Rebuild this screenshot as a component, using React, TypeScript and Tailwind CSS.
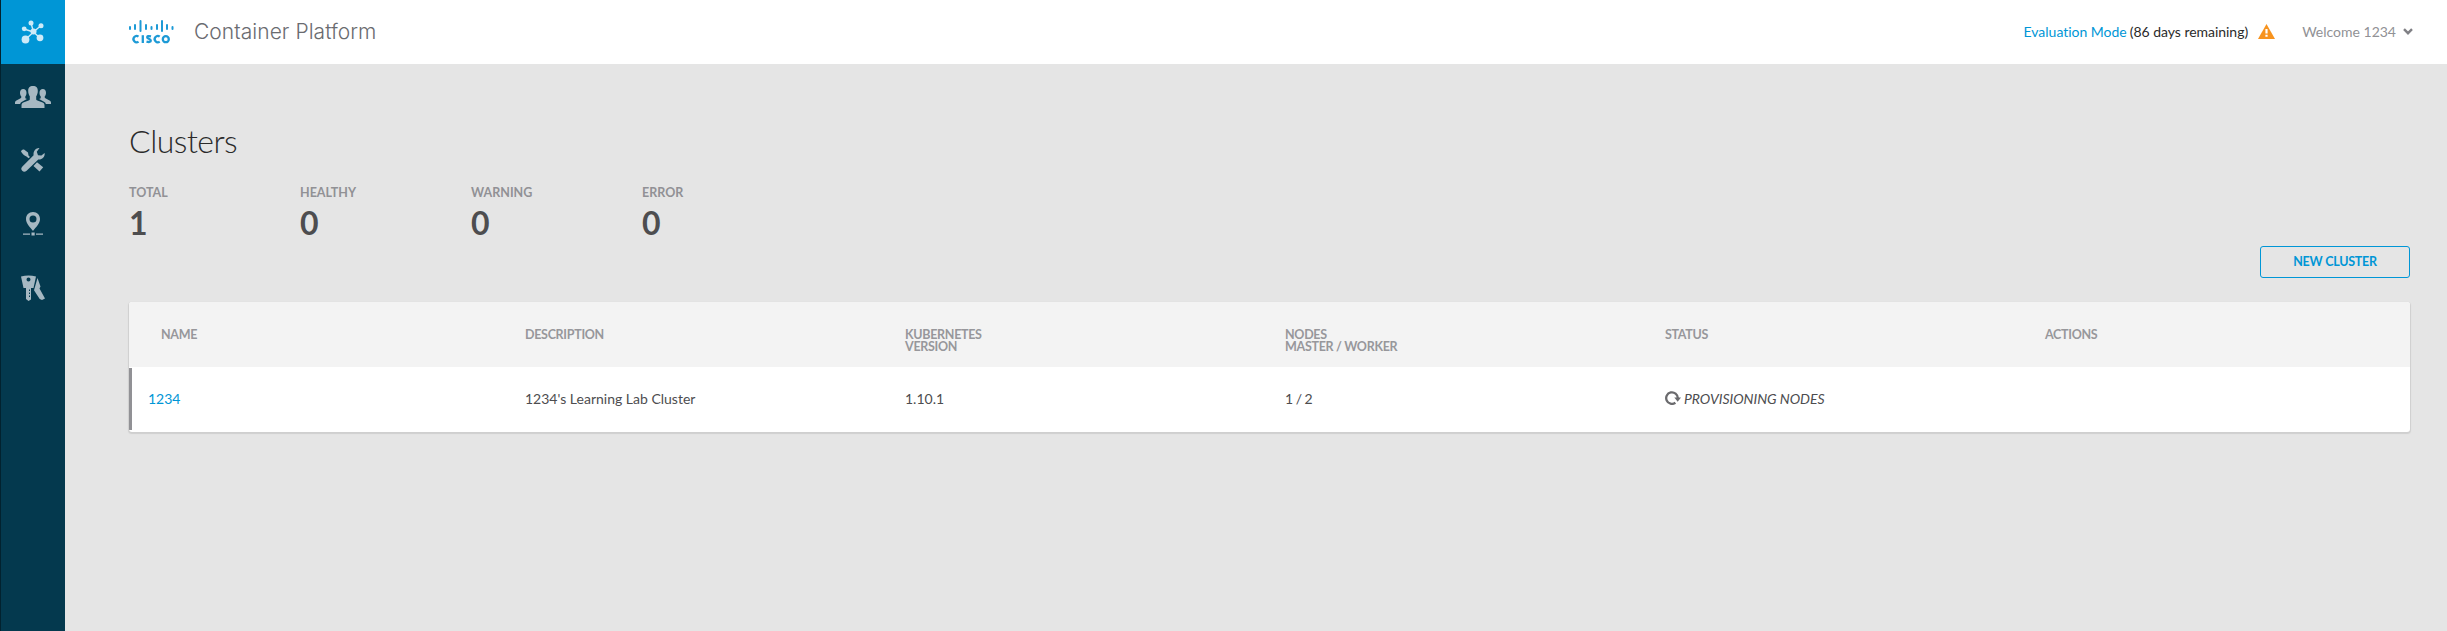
import React from "react";

const stats = [
  ["TOTAL", "1"],
  ["HEALTHY", "0"],
  ["WARNING", "0"],
  ["ERROR", "0"],
];

const logoBars = [
  [0, 6, 4], [5, 4, 6], [10.5, 0, 12], [16, 4, 6], [21.5, 6, 4], [27, 4, 6], [32, 0, 12], [37, 4, 6], [42.5, 6, 4],
];

function CiscoLogo() {
  return (
    <svg width="46" height="26" viewBox="0 0 46 26" className="shrink-0">
      <g fill="#1d9ad6">
        {logoBars.map(([x, y, h]) => (
          <rect key={x} x={x} y={y + 1} width="2" height={h} rx="1" />
        ))}
      </g>
      <g fill="none" stroke="#1d9ad6" strokeWidth="2.3">
        <path d="M9.500 17.700A3.100 3.100 0 1 0 9.500 22.600" />
        <path d="M13.800 16.200V24" />
        <path d="M22 17.400C19.200 16.700 18.200 17.300 18.200 18.300C18.200 20 21.800 19.600 21.800 21.800C21.800 23.200 19.700 23.200 17.500 22.600" />
        <path d="M30.700 17.700A3.100 3.100 0 1 0 30.700 22.600" />
        <circle cx="36.800" cy="20.200" r="3" />
      </g>
    </svg>
  );
}

function ClusterIcon() {
  return (
    <svg width="24" height="24" viewBox="0 0 24 24" fill="#cdeaf8" stroke="#cdeaf8">
      <path d="M12.500 12L10 3M12.500 12L20 5.500M12.500 12L3 9M12.500 12L4.500 19.500M12.500 12L19 18" strokeWidth="1.400" />
      <g stroke="none">
        <circle cx="12.500" cy="11.500" r="3" />
        <circle cx="10" cy="2.900" r="2.500" />
        <circle cx="20" cy="5.700" r="2.500" />
        <circle cx="3.200" cy="8.800" r="2.400" />
        <circle cx="4.500" cy="19.500" r="3.900" />
        <circle cx="19" cy="17.800" r="3.400" />
      </g>
    </svg>
  );
}

function UsersIcon() {
  return (
    <svg width="36" height="22" viewBox="0 0 36 22" fill="#a6b8c2">
      <path d="M18 0c3.400 0 4.800 2 4.800 4.800 0 2.300-.6 4.200-1.600 5.400v3c0 .6.500.9 1.200 1.200l5.300 2.200c1.300.6 1.800 1.500 1.800 2.900V22H6.500v-2.500c0-1.400.5-2.300 1.800-2.900l5.300-2.200c.7-.3 1.200-.6 1.200-1.200v-3c-1-1.200-1.600-3.100-1.600-5.400C13.200 2 14.600 0 18 0z" />
      <path d="M8.200 3c2 0 3.300 1.300 3.300 3.800 0 1.700-.5 2.800-1.200 3.700v1.800l1.600.7-5.300 2.900c-.9.500-1.200 1-1.400 2.100H0v-1.600c0-.8.400-1.300 1-1.700l4.600-2.400c.5-.3.700-.6.700-1v-.8C5.400 9.600 5 8.300 5 6.800 5 4.300 6.200 3 8.200 3z" />
      <path d="M27.800 3c-2 0-3.300 1.300-3.300 3.800 0 1.700.5 2.800 1.200 3.700v1.800l-1.600.7 5.300 2.900c.9.500 1.200 1 1.400 2.100H36v-1.600c0-.8-.4-1.300-1-1.700l-4.600-2.400c-.5-.3-.7-.6-.7-1v-.8c.9-.9 1.300-2.200 1.300-3.700C31 4.300 29.800 3 27.800 3z" />
    </svg>
  );
}

function ToolsIcon() {
  return (
    <svg width="24" height="24" viewBox="0 0 24 24" fill="#a6b8c2">
      <path d="M0 3.500C.5 2 1.500 1.500 3 1.500L7 4.500l.5 3L9 9 7.500 10.300 5.500 8.500C3.500 8 1.500 6 0 3.500z" />
      <path d="M18.500 0L15.800 3.800 17 7.200l3.400.2L23.600 5c.6 3.300-2 6.800-6.300 6.500L5.600 22.700c-1.800 1.600-3.200 1.300-4.400.1-1.200-1.300-1.400-2.500.2-4.200L12.600 7.200C12 2.900 15.200-.2 18.500 0z" />
      <path d="M16 14.300l6.200 4.900-3.700 4.400-6-5.600z" />
    </svg>
  );
}

function PinIcon() {
  return (
    <svg width="22" height="24" viewBox="0 0 22 24" fill="#a6b8c2">
      <path fillRule="evenodd" d="M11 0C15.200 0 18 3.200 18 7c0 4.600-4 8-7 12-3-4-7-7.400-7-12 0-3.800 2.800-7 7-7zm0 3.500a3.500 3.500 0 1 0 0 7 3.500 3.500 0 0 0 0-7z" />
      <path d="M1 21.500h7v1.200H1zM14 21.500h7v1.200h-7zM9.500 20.500h3.200v3H9.500z" />
    </svg>
  );
}

function KeysIcon() {
  return (
    <svg width="24" height="26" viewBox="0 0 24 26" fill="#a6b8c2">
      <path fillRule="evenodd" d="M0 1.500Q7.500-.5 15 1.500L12.500 13H10v11.500L7.500 26 5 24V13H2.500zM7.500 2.500a2 2 0 1 0 0 4 2 2 0 0 0 0-4z" />
      <path d="M9 14.500H8v1.500h1zM9 17.500H8v1.500h1zM9 20.500H8v1.500h1z" fill="#04394e" />
      <path d="M16.500 3l3 8.500-1 2 5.500 10-3 1.500-2.300-1-5.700-8.700z" />
    </svg>
  );
}

const navIcons = [UsersIcon, ToolsIcon, PinIcon, KeysIcon];

function RefreshIcon() {
  return (
    <svg width="16" height="14" viewBox="0 0 16 14" className="shrink-0">
      <path d="M10.400 11.800A5.800 5.800 0 1 1 12.800 7" fill="none" stroke="#6b6b6e" strokeWidth="2.300" />
      <path d="M9.300 6.500H16L12.700 10.700z" fill="#6b6b6e" />
    </svg>
  );
}

const columns = "grid grid-cols-[396px_380px_380px_380px_380px_1fr]";
const rowColumns = "grid grid-cols-[393px_380px_380px_380px_380px_1fr]";

export default function App() {
  return (
    <div className="flex h-[631px] w-[2447px] overflow-hidden bg-[#e5e5e5] font-['Lato',sans-serif] text-[#4d4d4f]">
      <aside className="flex w-[65px] shrink-0 flex-col border-l border-[#02222f] bg-[#04394e]">
        <div className="mb-px flex h-16 items-center justify-center bg-[#0096d6]">
          <ClusterIcon />
        </div>
        {navIcons.map((Icon, i) => (
          <div key={i} className="flex h-[63.600px] items-center justify-center">
            <Icon />
          </div>
        ))}
      </aside>
      <div className="flex min-w-0 flex-1 flex-col">
        <header className="flex h-16 shrink-0 items-center bg-white pl-16 pr-[34px]">
          <CiscoLogo />
          <h1 className="ml-[19px] font-['Inter',sans-serif] text-[21px] font-light tracking-[0.05px] text-[#6a6b70]">Container Platform</h1>
          <div className="ml-auto flex items-center pb-0.5 text-[14px]">
            <span className="tracking-[-0.02px] text-[#0096d6]">Evaluation Mode</span>
            <span className="ml-[3px] tracking-[-0.03px] text-[#2b2b2b]">(86 days remaining)</span>
            <svg width="17" height="15" viewBox="0 0 17 15" className="ml-[10px]">
              <path d="M8.500 0L17 15H0z" fill="#f7931e" />
              <path d="M7.400 5h2.200v4.500H7.400zM7.400 10.700h2.200v2H7.400z" fill="#fff" />
            </svg>
            <span className="ml-[27px] text-[#919195]">Welcome 1234</span>
            <svg width="10" height="7" viewBox="0 0 10 7" className="ml-[7px]">
              <path d="M1 1.200L5 5.200L9 1.200" fill="none" stroke="#808085" strokeWidth="2.400" />
            </svg>
          </div>
        </header>
        <main className="flex flex-col pl-16 pr-[37px]">
          <h2 className="mt-[57px] text-[32px] font-light leading-[40px] tracking-[-0.5px] text-[#2b2b2b]">Clusters</h2>
          <div className="mt-[24px] flex">
            {stats.map(([label, value]) => (
              <div key={label} className="w-[171px]">
                <div className="text-[12.500px] font-bold leading-4 text-[#919195]">{label}</div>
                <div className="mt-[6px] text-[32px] font-bold leading-8 tracking-[-0.5px]">{value}</div>
              </div>
            ))}
          </div>
          <button className="mt-[7px] flex h-8 w-[150px] items-center justify-center self-end rounded-[3px] border border-[#0096d6] text-[12.500px] font-bold tracking-[-0.25px] text-[#0096d6]">
            NEW CLUSTER
          </button>
          <section className="mt-6 h-[130px] overflow-hidden rounded-[3px] bg-white shadow-[0_1px_1px_1px_#cfcfcf]">
            <div className={`${columns} h-[65px] bg-[#f3f3f3] pt-[27px] text-[12.500px] font-bold leading-3 tracking-[-0.3px] text-[#97979b]`}>
              <div className="pl-8">NAME</div>
              <div>DESCRIPTION</div>
              <div>KUBERNETES<br />VERSION</div>
              <div>NODES<br />MASTER / WORKER</div>
              <div>STATUS</div>
              <div>ACTIONS</div>
            </div>
            <div className={`${rowColumns} mt-px h-[62px] items-center border-l-[3px] border-[#919195] pb-0.5 text-[14px]`}>
              <div className="pl-4 text-[#0096d6]">1234</div>
              <div>1234's Learning Lab Cluster</div>
              <div>1.10.1</div>
              <div className="[word-spacing:-1px]">1 / 2</div>
              <div className="flex items-center gap-[3px] italic tracking-[-0.04px]">
                <RefreshIcon />
                PROVISIONING NODES
              </div>
              <div />
            </div>
          </section>
        </main>
      </div>
    </div>
  );
}
